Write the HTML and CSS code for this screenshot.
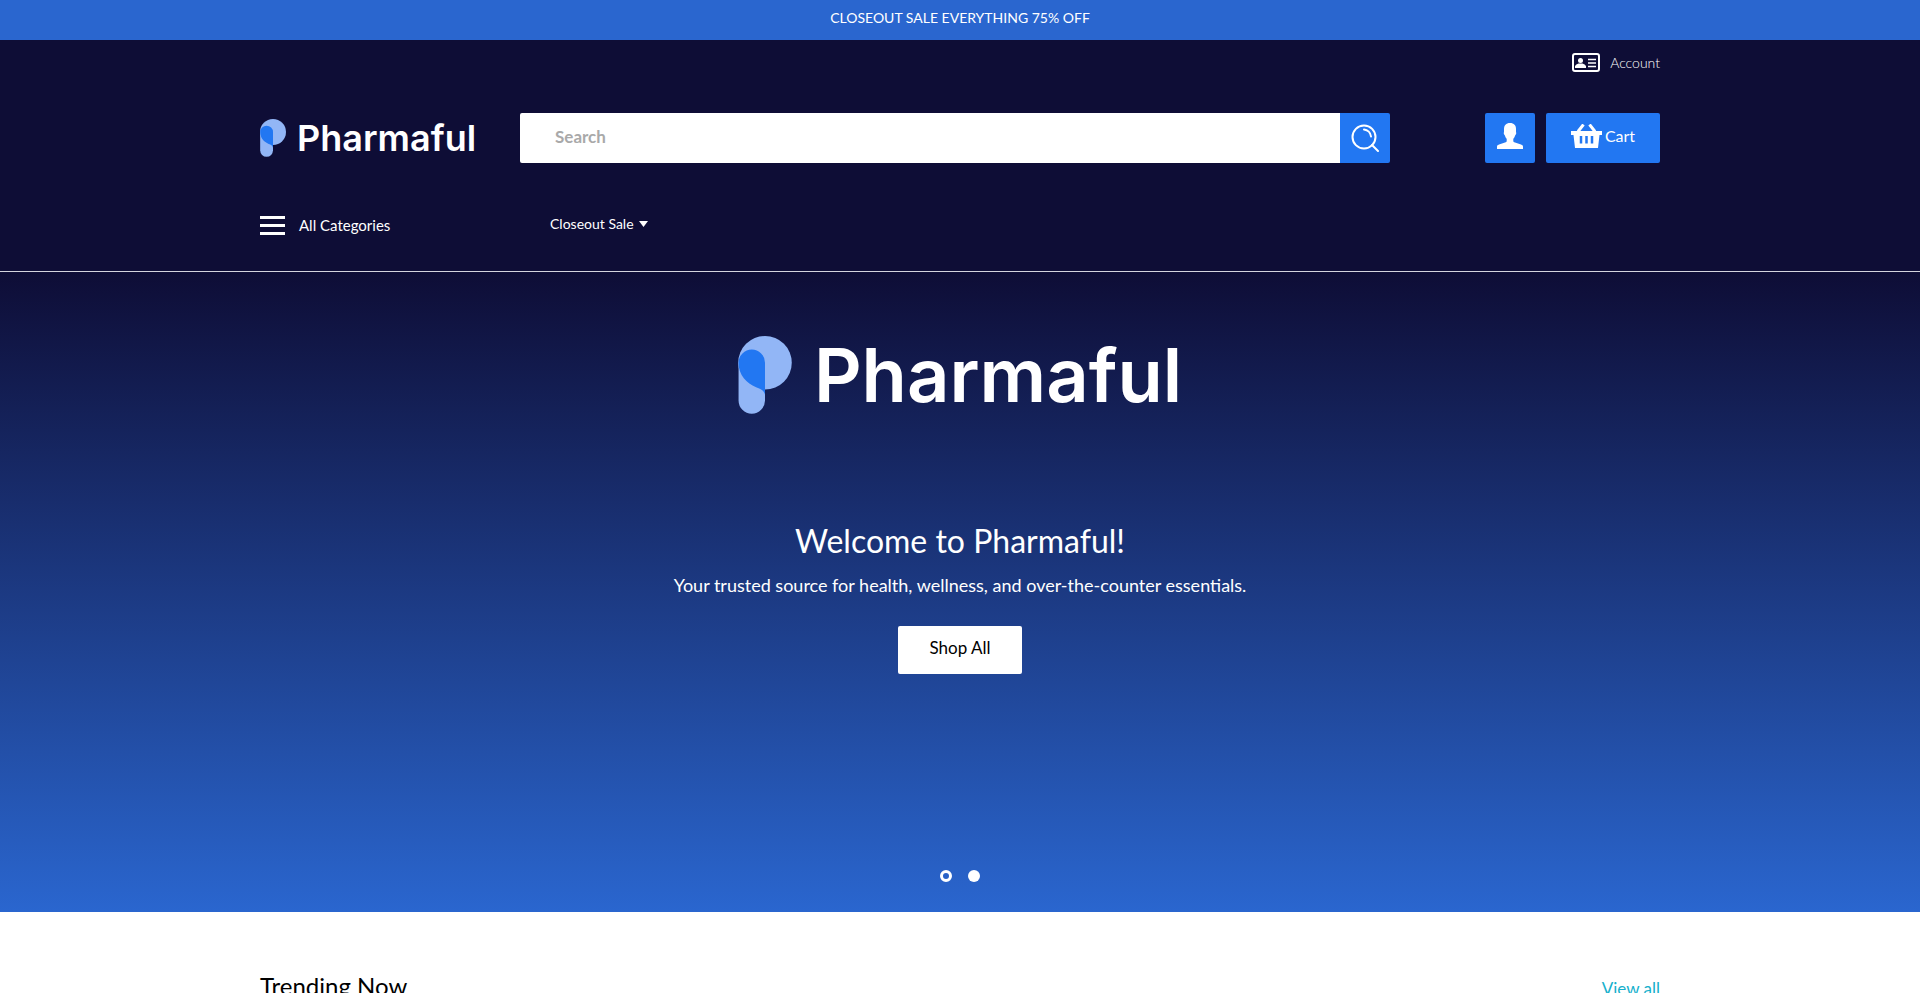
FILE: index.html
```
<!DOCTYPE html>
<html lang="en">
<head>
    <meta charset="UTF-8">
    <meta name="viewport" content="width=device-width, initial-scale=1.0">
    <title>Pharmaful</title>
    <link rel="stylesheet" href="styles.css">
</head>
<body>
    <svg class="sprite" aria-hidden="true">
        <symbol id="logo-mark" viewBox="0 0 162 236">
            <circle cx="81" cy="81" r="81" fill="#92b6f6"/>
            <path d="M1 81v114a40 40 0 0 0 80 0V81z" fill="#92b6f6"/>
            <path d="M1 81a40 40 0 0 1 80 0v97C78 164 68 160 54 155 26 144 1 118 1 81z" fill="#2277f2"/>
        </symbol>
    </svg>

    <div class="announcement">CLOSEOUT SALE EVERYTHING 75% OFF</div>

    <header class="header">
        <div class="container">
            <div class="top-links">
                <a href="#" class="account-link">
                    <svg width="28" height="19" viewBox="0 0 28 19" aria-hidden="true">
                        <rect x="1" y="1" width="26" height="17" rx="2" fill="none" stroke="#fff" stroke-width="2"/>
                        <circle cx="8.500" cy="7.500" r="2.500" fill="#fff"/>
                        <path d="M3 15v-2q1-2 3.500-2.500h4Q13 11 14 13v2z" fill="#fff"/>
                        <path d="M16 6.500h8M16 10h8M16 13.500h8" stroke="#fff" stroke-width="1.500"/>
                    </svg>
                    Account
                </a>
            </div>

            <div class="main-row">
                <a href="#" class="logo">
                    <svg class="logo-mark" aria-hidden="true"><use href="#logo-mark"/></svg>
                    Pharmaful
                </a>
                <form class="search">
                    <input type="search" placeholder="Search" aria-label="Search">
                    <button type="button" aria-label="Submit search">
                        <svg width="28" height="28" viewBox="0 0 28 28" fill="none" stroke="#fff" stroke-width="2" stroke-linecap="round" aria-hidden="true">
                            <circle cx="13" cy="13" r="11.500"/>
                            <path d="M13 5.500a8 8 0 0 1 7 7M21 21l6 6"/>
                        </svg>
                    </button>
                </form>
                <div class="actions">
                    <button type="button" class="user-btn" aria-label="My account">
                        <svg width="26" height="26" viewBox="0 0 26 26" fill="#fff" aria-hidden="true">
                            <path d="M13 0C9 0 7 2.500 7 6v3c-.7 1 .2 3 .9 3.400.4 1.600 1.100 2.600 1.800 3.300v2.200c0 .8-.6 1.200-1.700 1.600L2 21.500C.7 22 0 22.600 0 23.700V26h26v-2.300c0-1.100-.7-1.700-2-2.200l-6-2c-1.100-.4-1.700-.8-1.700-1.600v-2.200c.7-.7 1.400-1.700 1.800-3.300.7-.4 1.600-2.400.9-3.400V6c0-3.500-2-6-6-6z"/>
                        </svg>
                    </button>
                    <button type="button" class="cart-btn">
                        <svg width="31" height="24" viewBox="0 0 31 24" aria-hidden="true">
                            <path d="M0 7h31v4h-2.500L27 24H4L2.500 11H0z" fill="#fff"/>
                            <path d="M7 7.500l5.500-7M24 7.500l-5.500-7" stroke="#fff" stroke-width="3"/>
                            <path d="M10 12v7.500M15.500 12v7.500M21 12v7.500" stroke="#2277f2" stroke-width="2.500"/>
                        </svg>
                        Cart
                    </button>
                </div>
            </div>

            <nav class="nav">
                <button type="button" class="categories">
                    <svg width="25" height="19" viewBox="0 0 25 19" aria-hidden="true">
                        <path d="M0 0h25v3H0zM0 8h25v3H0zM0 16h25v3H0z" fill="#fff"/>
                    </svg>
                    All Categories
                </button>
                <a href="#" class="nav-link">
                    Closeout Sale
                    <svg width="9" height="6" viewBox="0 0 9 6" aria-hidden="true"><path d="M0 0h9L4.500 6z" fill="#fff"/></svg>
                </a>
            </nav>
        </div>
    </header>

    <main>
        <section class="hero">
            <div class="hero-logo">
                <svg class="logo-mark" aria-hidden="true"><use href="#logo-mark"/></svg>
                <span>Pharmaful</span>
            </div>
            <h1>Welcome to Pharmaful!</h1>
            <p>Your trusted source for health, wellness, and over-the-counter essentials.</p>
            <a href="#" class="shop-btn">Shop All</a>
            <div class="dots">
                <button type="button" class="dot active" aria-label="Slide 1"></button>
                <button type="button" class="dot" aria-label="Slide 2"></button>
            </div>
        </section>

        <section class="trending container">
            <h2>Trending Now</h2>
            <a href="#">View all</a>
        </section>
    </main>
</body>
</html>
```
FILE: styles.css
```
* {
    margin: 0;
    padding: 0;
    box-sizing: border-box;
}

html {
    scrollbar-width: none;
}

body {
    font-family: Lato, 'Open Sans', sans-serif;
    font-size: 16px;
    background: #fff;
    color: #000;
}

a {
    color: inherit;
    text-decoration: none;
}

button {
    font-family: inherit;
    color: white;
    border: none;
    cursor: pointer;
}

.sprite {
    display: none;
}

.container {
    max-width: 1440px;
    margin: 0 auto;
    padding: 0 20px;
}

.announcement {
    height: 40px;
    background: #2a66cf;
    color: white;
    font-size: 14px;
    line-height: 36px;
    text-align: center;
}

.header {
    background: #0e0d36;
    color: white;
    border-bottom: 1px solid #d4d4de;
}

.top-links {
    display: flex;
    justify-content: flex-end;
    padding-top: 12px;
}

.account-link {
    display: flex;
    align-items: center;
    gap: 10px;
    height: 20px;
    font-size: 14px;
    font-weight: 300;
}

.main-row {
    display: flex;
    align-items: center;
    margin-top: 41px;
}

.logo {
    display: flex;
    align-items: center;
    gap: 11px;
    width: 260px;
    font-family: Inter, sans-serif;
    font-size: 36px;
    line-height: 38px;
    font-weight: 600;
}

.logo .logo-mark {
    width: 26px;
    height: 38px;
}

.search {
    display: flex;
    flex: 1;
    height: 50px;
}

.search input {
    flex: 1;
    min-width: 0;
    border: none;
    border-radius: 2px 0 0 2px;
    padding: 0 35px 4px;
    background: white;
    font-family: inherit;
    font-size: 17px;
    font-weight: bold;
}

.search input::placeholder {
    color: #a9a9a9;
}

.search button {
    display: grid;
    place-items: center;
    width: 50px;
    background: #2277f2;
    border-radius: 0 2px 2px 0;
}

.actions {
    display: flex;
    gap: 11px;
    margin-left: 95px;
}

.actions button {
    display: flex;
    align-items: center;
    justify-content: center;
    gap: 3px;
    height: 50px;
    padding-bottom: 5px;
    background: #2277f2;
    border-radius: 2px;
    font-size: 16px;
}

.user-btn {
    width: 50px;
}

.cart-btn {
    width: 114px;
}

.nav {
    display: flex;
    align-items: center;
    height: 108px;
    padding-top: 16px;
}

.categories {
    display: flex;
    align-items: center;
    gap: 14px;
    width: 290px;
    height: 24px;
    background: none;
    font-size: 15px;
}

.nav-link {
    display: flex;
    align-items: center;
    gap: 5px;
    font-size: 14px;
    line-height: 20px;
    padding-bottom: 2px;
}

.hero {
    display: flex;
    flex-direction: column;
    align-items: center;
    height: 640px;
    padding: 64px 20px 30px;
    background: linear-gradient(#0e0d36, #2a66cf);
    color: white;
    text-align: center;
}

.hero-logo {
    display: flex;
    align-items: center;
    gap: 22px;
    height: 78px;
    font-family: Inter, sans-serif;
    font-size: 74px;
    line-height: 78px;
    font-weight: 600;
}

.hero-logo .logo-mark {
    width: 54px;
    height: 78px;
}

.hero h1 {
    margin-top: 107px;
    font-size: 32px;
    line-height: 40px;
    font-weight: normal;
}

.hero p {
    margin-top: 12px;
    font-size: 18px;
    line-height: 24px;
}

.shop-btn {
    height: 48px;
    margin-top: 29px;
    padding: 0 31px;
    background: white;
    border-radius: 2px;
    color: black;
    font-size: 17px;
    line-height: 44px;
}

.dots {
    display: flex;
    gap: 16px;
    margin-top: auto;
}

.dot {
    width: 12px;
    height: 12px;
    border-radius: 50%;
    background: white;
}

.dot.active {
    background: none;
    border: 3px solid white;
}

.trending {
    display: flex;
    justify-content: space-between;
    align-items: baseline;
    padding-top: 60px;
    padding-bottom: 40px;
}

.trending h2 {
    font-size: 24px;
    line-height: 28px;
    font-weight: normal;
}

.trending a {
    color: #15b0cc;
    font-size: 17px;
}

@media (max-width: 900px) {
    .main-row {
        flex-wrap: wrap;
        gap: 20px;
    }

    .actions {
        margin-left: 0;
    }
}
```
